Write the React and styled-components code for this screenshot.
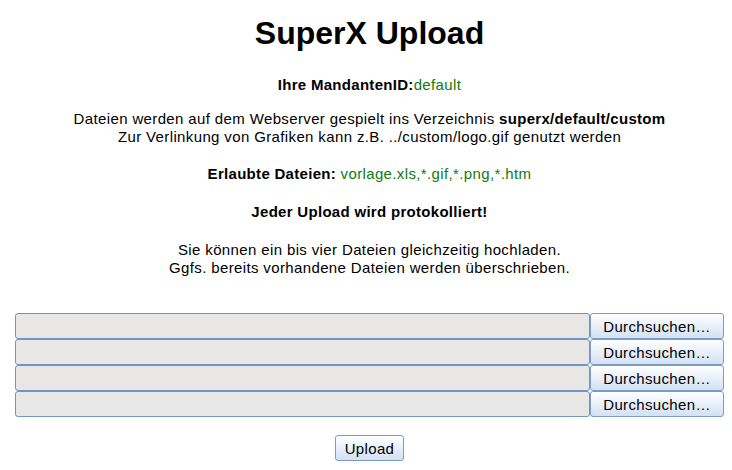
import React from 'react';
import styled, { createGlobalStyle } from 'styled-components';

const GlobalStyle = createGlobalStyle`
    body {
        margin: 0;
        background: #ffffff;
        font-family: "Liberation Sans", Arial, sans-serif;
        color: #000;
    }
`;

const Page = styled.div`
    padding: 0 8px 0 15px;
    text-align: center;
    font-size: 15px;
    letter-spacing: 0.37px;
`;

const Title = styled.h1`
    font-size: 32px;
    font-weight: bold;
    letter-spacing: 0;
    margin: 15px 0 24px;
    line-height: 37px;
`;

const Para = styled.p`
    margin: 0 0 ${(props) => props.gap}px;
    line-height: 18px;
`;

const Strong = styled.b`
    letter-spacing: 0.3px;
`;

const Green = styled.span`
    color: #117a11;
`;

const FileList = styled.div`
    display: flex;
    flex-direction: column;
    margin-top: 36px;
`;

const FileRow = styled.div`
    display: flex;
    height: 26px;
`;

const PathField = styled.div`
    flex: 1;
    box-sizing: border-box;
    background: #e8e7e5;
    border: 1px solid #6f95c2;
    border-radius: 3px;
`;

const Button = styled.button`
    box-sizing: border-box;
    height: 26px;
    padding: 0 ${(props) => props.$px || 8}px;
    font-family: "Liberation Sans", Arial, sans-serif;
    font-size: 15px;
    letter-spacing: 0.35px;
    color: #000;
    background: linear-gradient(#ffffff, #e8f0fa 50%, #d3e1f1);
    border: 1px solid #7b9dc4;
    border-radius: 3px;
`;

const BrowseButton = styled(Button)`
    width: 134px;
`;

const UploadWrap = styled.div`
    margin-top: 18px;
`;

const rows = [0, 1, 2, 3];

export default function App() {
    return (
        <>
            <GlobalStyle />
            <Page>
                <Title>SuperX Upload</Title>
                <Para gap={16}>
                    <Strong>Ihre MandantenID:</Strong><Green>default</Green>
                </Para>
                <Para gap={19}>
                    Dateien werden auf dem Webserver gespielt ins Verzeichnis <Strong>superx/default/custom</Strong>
                    <br />
                    Zur Verlinkung von Grafiken kann z.B. ../custom/logo.gif genutzt werden
                </Para>
                <Para gap={20}>
                    <Strong>Erlaubte Dateien: </Strong><Green>vorlage.xls,*.gif,*.png,*.htm</Green>
                </Para>
                <Para gap={20}>
                    <Strong>Jeder Upload wird protokolliert!</Strong>
                </Para>
                <Para gap={0}>
                    Sie können ein bis vier Dateien gleichzeitig hochladen.
                    <br />
                    Ggfs. bereits vorhandene Dateien werden überschrieben.
                </Para>
                <FileList>
                    {rows.map((r) => (
                        <FileRow key={r}>
                            <PathField />
                            <BrowseButton>Durchsuchen…</BrowseButton>
                        </FileRow>
                    ))}
                </FileList>
                <UploadWrap>
                    <Button $px={9}>Upload</Button>
                </UploadWrap>
            </Page>
        </>
    );
}
